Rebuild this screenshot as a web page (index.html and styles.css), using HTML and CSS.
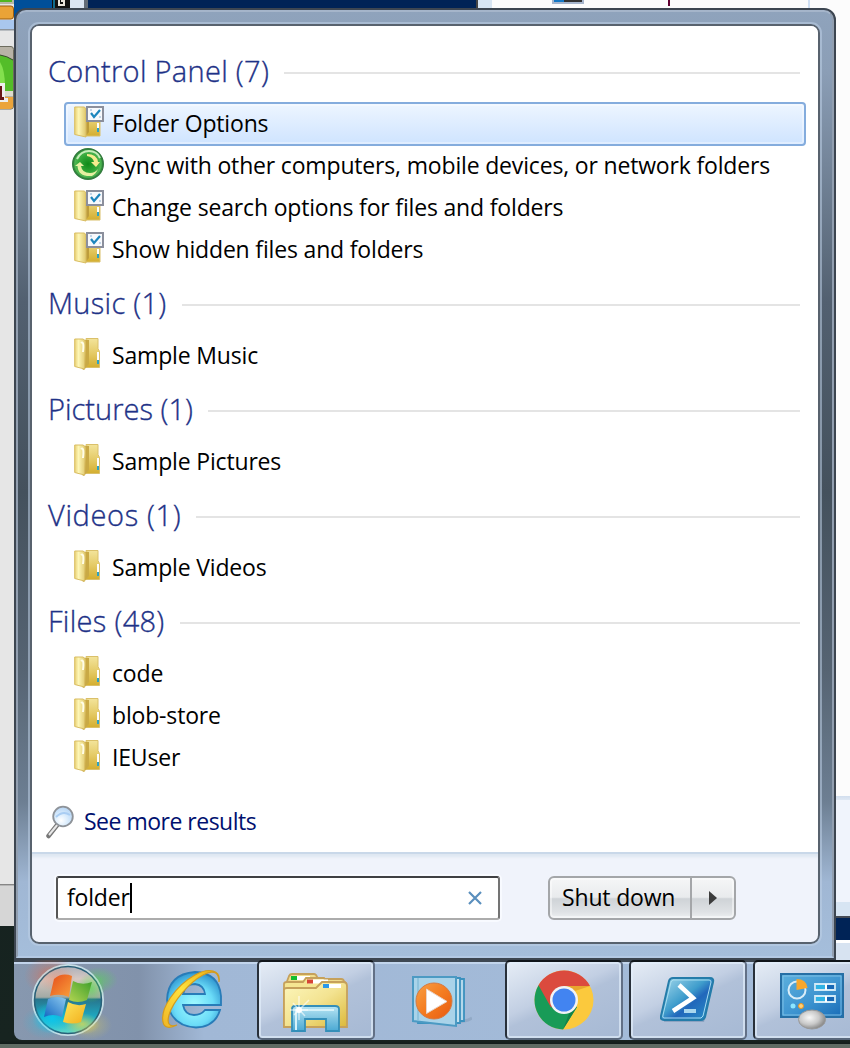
FILE: index.html
```html
<!DOCTYPE html>
<html lang="en">
<head>
<meta charset="utf-8">
<title>Start menu</title>
<link rel="stylesheet" href="styles.css">
</head>
<body>
<svg class="defs" width="0" height="0" aria-hidden="true">
  <defs>
    <linearGradient id="gFront" x1="0" x2="1"><stop offset="0" stop-color="#e9d075"/><stop offset=".35" stop-color="#fdf6b5"/><stop offset="1" stop-color="#dfc76b"/></linearGradient>
    <linearGradient id="gBack" x1="0" y1="0" x2="0" y2="1"><stop offset="0" stop-color="#f3e49b"/><stop offset=".5" stop-color="#e5cb68"/><stop offset="1" stop-color="#d4ae2f"/></linearGradient>
    <symbol id="folder" viewBox="0 0 32 32">
      <path d="M12 .5h12v10l1.500 3v16H12z" fill="url(#gBack)" stroke="#dac06a"/>
      <path d="M23 14h2v12h-2z" fill="#fff"/><path d="M23 22h2v4h-2z" fill="#2aa3c5"/>
      <path d="M8 4q3-3 7-2v24l-5 6-2-1z" fill="#c9a945"/>
      <path d="M.7 1h8.300q3 1 2.500 4l-1 26L.7 28.500z" fill="url(#gFront)" stroke="#d9bd62"/>
      <path d="M7 5c2-2 3 1 2 9" stroke="#fffde8" stroke-width="2" fill="none"/>
    </symbol>
    <symbol id="options" viewBox="0 0 32 32">
      <path d="M12 3h14v27H12z" fill="url(#gBack)" stroke="#dac06a"/>
      <path d="M23 17h2v9h-2z" fill="#fff"/><path d="M23 22h2v4h-2z" fill="#2aa3c5"/>
      <path d="M10 3l5 1v22l-4 5z" fill="#bd9c3c"/>
      <path d="M.7 1h9.800l1.500 2v28L.7 28.500z" fill="url(#gFront)" stroke="#d9bd62"/>
      <path d="M13 1h16v14H13z" fill="#f7f9fc" stroke="#8b8f9c" stroke-width="2"/>
      <path d="M17 7l3 4 6-7" stroke="#1d86bd" stroke-width="2.200" fill="none"/>
      <path d="M16 4h2M25 11h2" stroke="#c3d5e8" stroke-width="2"/>
    </symbol>
    <radialGradient id="gSync" cx=".5" cy=".5" r=".5"><stop offset="0" stop-color="#0f8a18"/><stop offset=".6" stop-color="#35a93a"/><stop offset=".85" stop-color="#4fb552"/><stop offset="1" stop-color="#1f7a2b"/></radialGradient>
    <linearGradient id="gFile" x1="0" y1="0" x2="1" y2="1"><stop offset="0" stop-color="#fdf7bd"/><stop offset=".5" stop-color="#f3e391"/><stop offset="1" stop-color="#dcb93a"/></linearGradient>
    <linearGradient id="gStand" x1="0" y1="0" x2="0" y2="1"><stop offset="0" stop-color="#b9e6f4"/><stop offset=".5" stop-color="#7fc5e2"/><stop offset="1" stop-color="#4ba9d4"/></linearGradient>
    <radialGradient id="gIe" cx=".5" cy=".6" r=".6"><stop offset="0" stop-color="#a2fbff"/><stop offset=".6" stop-color="#6bdcf8"/><stop offset="1" stop-color="#2f95cf"/></radialGradient>
    <linearGradient id="gRing" x1="0" y1="1" x2="1" y2="0"><stop offset="0" stop-color="#efb526"/><stop offset=".5" stop-color="#ffe23d"/><stop offset="1" stop-color="#e8a90f"/></linearGradient>
    <linearGradient id="gPs" x1="0" y1="0" x2="1" y2="1"><stop offset="0" stop-color="#a8dbed"/><stop offset=".45" stop-color="#3f9dcc"/><stop offset=".6" stop-color="#2167bb"/><stop offset="1" stop-color="#2b94c8"/></linearGradient>
    <linearGradient id="gCp" x1="0" y1="0" x2="1" y2="1"><stop offset="0" stop-color="#5cb0dd"/><stop offset=".55" stop-color="#3e94d0"/><stop offset="1" stop-color="#176bb7"/></linearGradient>
    <radialGradient id="gMouse" cx=".4" cy=".4" r=".6"><stop offset="0" stop-color="#f8f8f8"/><stop offset=".6" stop-color="#c9c9c9"/><stop offset="1" stop-color="#8d8d8d"/></radialGradient>
    <linearGradient id="gPlay" x1="0" y1="0" x2="1" y2="1"><stop offset="0" stop-color="#f7a046"/><stop offset=".5" stop-color="#f47c20"/><stop offset="1" stop-color="#e85a10"/></linearGradient>
    <linearGradient id="gOrb" x1="0" y1="0" x2="0" y2="1"><stop offset="0" stop-color="#a9aeb9"/><stop offset=".2" stop-color="#d6c8c2"/><stop offset=".46" stop-color="#a2aaa5"/><stop offset=".49" stop-color="#28758d"/><stop offset=".75" stop-color="#1eabc4"/><stop offset="1" stop-color="#68dfc9"/></linearGradient>
    <radialGradient id="gRed"><stop offset="0" stop-color="#f3653c" stop-opacity=".8"/><stop offset="1" stop-color="#f3653c" stop-opacity="0"/></radialGradient>
    <radialGradient id="gGreen"><stop offset="0" stop-color="#4de044" stop-opacity=".8"/><stop offset="1" stop-color="#4de044" stop-opacity="0"/></radialGradient>
    <radialGradient id="gCyan"><stop offset="0" stop-color="#09c8f0" stop-opacity=".9"/><stop offset="1" stop-color="#09c8f0" stop-opacity="0"/></radialGradient>
    <radialGradient id="gYellow"><stop offset="0" stop-color="#f4dc3d" stop-opacity=".85"/><stop offset="1" stop-color="#f4dc3d" stop-opacity="0"/></radialGradient>
    <linearGradient id="fRed" x1="0" y1="0" x2="1" y2="1"><stop offset="0" stop-color="#e54c1c"/><stop offset="1" stop-color="#f9a13b"/></linearGradient>
    <linearGradient id="fGreen" x1="1" y1="0" x2="0" y2="1"><stop offset="0" stop-color="#3c9e2b"/><stop offset="1" stop-color="#b4d552"/></linearGradient>
    <linearGradient id="fBlue" x1="0" y1="1" x2="1" y2="0"><stop offset="0" stop-color="#1368c2"/><stop offset="1" stop-color="#8dc9ef"/></linearGradient>
    <linearGradient id="fYellow" x1="0" y1="0" x2="1" y2="1"><stop offset="0" stop-color="#fde65c"/><stop offset="1" stop-color="#f2ae1c"/></linearGradient>
    <radialGradient id="gLens" cx=".4" cy=".7" r=".7"><stop offset="0" stop-color="#ffffff"/><stop offset=".5" stop-color="#d8ebfc"/><stop offset="1" stop-color="#b6d5f5"/></radialGradient>
  </defs>
</svg>

<div class="desktop">
  <div class="strip-top">
    <span class="t-blue"></span><svg class="t-glyph" width="18" height="8" viewBox="0 0 18 8"><path d="M0 0h18v8H0z" fill="#111"/><path d="M7 0v5h5V1H9" stroke="#e8e4dc" stroke-width="2" fill="none"/><path d="M2 0v8" stroke="#126b8b" stroke-width="2"/></svg><span class="t-pale"></span><span class="t-edge"></span><span class="t-navy"></span><span class="t-pale2"></span><span class="t-white"><i class="t-icon"></i><i class="t-caret"></i><i class="t-line"></i></span>
  </div>
  <div class="strip-left">
    <svg width="14" height="926" viewBox="0 0 14 926">
      <path d="M0 0h14v926H0z" fill="#e6e6e6"/>
      <path d="M0 0h14v4H0z" fill="#b7b8a5"/><path d="M0 0h12v2H0z" fill="#4fb622"/>
      <path d="M-4 6h15q2.500 0 2.500 3v7q0 3-2.500 3H-4z" fill="#eaa337" stroke="#9b5d10"/>
      <path d="M0 20h14v9H0z" fill="#a9c7ee"/><path d="M0 29h14v1.500H0z" fill="#8d949c"/>
      <path d="M-3 46.500h14q2.500 0 2.500 3V106q0 3-2.500 3H-3z" fill="#b8b3a6" stroke="#6d6c5e"/>
      <path d="M0 55q7 1 13 5v31H0z" fill="#54bd29"/><path d="M0 55q7 1 13 5" stroke="#374b2b" fill="none"/>
      <path d="M0 62q5 8 5 25H0z" fill="#83e04e"/>
      <path d="M0 91h13v5H0z" fill="#dedbcd"/><path d="M0 97h13v9q0 3-3 3H0z" fill="#eba43b"/>
      <path d="M0 83h5v15h3v4H0z" fill="#eee"/><path d="M0 86h2v11h2v3H0z" fill="#671616"/>
      <path d="M0 884h14v1.500H0z" fill="#868686"/><path d="M0 886h14v40H0z" fill="#d6d6d6"/>
    </svg>
  </div>
  <div class="strip-right"></div>

  <main class="menu">
    <div class="frame">
      <div class="panel">
        <div class="results">
          <h2 class="group"><span>Control Panel (7)</span></h2>
          <div class="item selected"><svg class="icon"><use href="#options"/></svg><span>Folder Options</span></div>
          <div class="item"><svg class="icon sync" viewBox="0 0 32 32">
            <circle cx="16" cy="16" r="15.300" fill="url(#gSync)" stroke="#347c3f" stroke-width="1.400"/>
            <path d="M5 11Q9 3 17 3q8 0 11 7" stroke="#c4ecb8" stroke-width="2" fill="none"/>
            <path d="M15 6q10 0 11 8h2l-4 5-5-5h3q-1-5-7-6z" fill="#f5eb8e"/>
            <path d="M20 28Q6 29 5.500 18H3l5-4 4 4h-3q1 7 9 7 5 0 8-4-2 5-6 7z" fill="#e6efa1"/>
          </svg><span>Sync with other computers, mobile devices, or network folders</span></div>
          <div class="item"><svg class="icon"><use href="#options"/></svg><span>Change search options for files and folders</span></div>
          <div class="item"><svg class="icon"><use href="#options"/></svg><span>Show hidden files and folders</span></div>
          <h2 class="group"><span>Music (1)</span></h2>
          <div class="item"><svg class="icon"><use href="#folder"/></svg><span>Sample Music</span></div>
          <h2 class="group tight"><span>Pictures (1)</span></h2>
          <div class="item"><svg class="icon"><use href="#folder"/></svg><span>Sample Pictures</span></div>
          <h2 class="group loose"><span>Videos (1)</span></h2>
          <div class="item"><svg class="icon"><use href="#folder"/></svg><span>Sample Videos</span></div>
          <h2 class="group"><span>Files (48)</span></h2>
          <div class="item"><svg class="icon"><use href="#folder"/></svg><span>code</span></div>
          <div class="item"><svg class="icon"><use href="#folder"/></svg><span>blob-store</span></div>
          <div class="item"><svg class="icon"><use href="#folder"/></svg><span>IEUser</span></div>
          <div class="more">
            <svg class="lens" viewBox="0 0 30 34"><path d="M2.500 31L12 19" stroke="#777" stroke-width="4.500" stroke-linecap="round"/><path d="M3 30L12 19" stroke="#e8e8e8" stroke-width="2"/><circle cx="17" cy="11.500" r="9.800" fill="url(#gLens)" stroke="#8e9399" stroke-width="1.800"/><path d="M10 12q7-7 14-2" stroke="#a9cdf3" stroke-width="2" fill="none"/></svg>
            <span>See more results</span>
          </div>
        </div>
        <div class="footer">
          <div class="search"><span>folder</span><i class="caret"></i>
            <svg class="clear" viewBox="0 0 14 14"><path d="M1 1l12 12M13 1L1 13" stroke="#5a8fbd" stroke-width="2.200"/></svg>
          </div>
          <div class="power"><span class="shut">Shut down</span><span class="arrow"><svg width="8" height="14" viewBox="0 0 8 14"><path d="M0 0l8 7-8 7z" fill="#3c3c3c"/></svg></span></div>
        </div>
      </div>
    </div>
  </main>

  <footer class="taskbar">
    <div class="slot orb"><svg width="104" height="80" viewBox="0 0 104 80">
      <ellipse cx="36" cy="16" rx="26" ry="20" fill="url(#gRed)" opacity=".6"/><ellipse cx="84" cy="20" rx="20" ry="13" fill="url(#gGreen)" opacity=".6"/><ellipse cx="32" cy="62" rx="24" ry="17" fill="url(#gCyan)" opacity=".4"/><ellipse cx="76" cy="65" rx="22" ry="15" fill="url(#gYellow)" opacity=".4"/>
      <circle cx="54" cy="40" r="35" fill="url(#gOrb)" stroke="#c5dde5" stroke-width="2"/>
      <circle cx="54" cy="40" r="33.500" fill="none" stroke="#286078" stroke-width="1.500"/>
      <ellipse cx="42" cy="18" rx="20" ry="14" fill="url(#gRed)" opacity=".4"/><ellipse cx="77" cy="28" rx="14" ry="15" fill="url(#gGreen)" opacity=".8"/><ellipse cx="38" cy="58" rx="20" ry="16" fill="url(#gCyan)"/><ellipse cx="68" cy="64" rx="18" ry="11" fill="url(#gYellow)" opacity=".8"/>
      <path d="M40 19q8-7 18-3l-3 21q-9-4-19-1z" fill="url(#fRed)"/>
      <path d="M59 21q9 5 19 1l-5 18q-9 4-18 0z" fill="url(#fGreen)"/>
      <path d="M34 39q9-4 18 0l-4 18q-9-4-18 0z" fill="url(#fBlue)"/>
      <path d="M54 42q9 5 18 2l-5 18q-8 3-18 0z" fill="url(#fYellow)"/>
    </svg></div>
    <div class="slot ie"><svg width="64" height="66" viewBox="0 0 64 66">
      <path fill-rule="evenodd" d="M61 39H23q2 10 11 10 7 0 11-5h15Q55 61 36 61.500 10 60 7 34 8 8 35 6 59 7 61 30zM23 28h22q-1-9-10-10-10 0-12 10z" fill="url(#gIe)" stroke="#287cb8" stroke-width="1.800"/>
      <path d="M59 16C61 4 49 1 35 9 15 20 0 43 3 56c1 7 8 6 14 3C8 62 7 56 9 49 13 35 30 16 43 9c9-5 16-4 16 7z" fill="url(#gRing)" stroke="#d39b1f" stroke-width="1.200"/>
    </svg></div>
    <div class="slot button wide"><svg width="68" height="62" viewBox="0 0 68 62">
      <path d="M4 12l3-8q1-2 3-2h22q2 0 3 3l1 2h23q3 0 3 3v25H4z" fill="#f0dc8c" stroke="#c6a15b" stroke-width="1.800"/>
      <path d="M10 4h18v4H10z" fill="#fff"/><path d="M9 4h6v4H9z" fill="#13bd30"/>
      <path d="M2 12q0-2 3-2h16l3-4h18l2 4h18q2 0 2 3v41H2z" fill="#f5e692" stroke="#c6a15b" stroke-width="1.800"/>
      <path d="M26 7.500h20v4H26z" fill="#fff"/><path d="M25 7.500h6v4h-6z" fill="#d64535"/>
      <path d="M2 18q0-2 3-2h29l6-6h21q4 0 4 4v41H2z" fill="url(#gFile)" stroke="#c6a15b" stroke-width="1.800"/>
      <path d="M42 12h17v4H42z" fill="#fff"/><path d="M41 12h6v4h-6z" fill="#2a98ea"/>
      <path d="M10 37q0-3 3-3h40q4 0 4 3v22H44V47H23v12H10z" fill="url(#gStand)" stroke="#348fb9" stroke-width="1.800"/>
      <path d="M14 58V38h38" stroke="#d6f2fa" stroke-width="2" fill="none"/><path d="M17 24v24M8 38h18M11 31l12 13M27 28L12 43" stroke="#fff" stroke-opacity=".6" stroke-width="1.500"/><circle cx="17" cy="38" r="3" fill="#fff"/>
    </svg></div>
    <div class="slot media"><svg width="60" height="52" viewBox="0 0 60 52">
      <path d="M42 46q12 0 18-4" stroke="#7890ac" stroke-width="3" opacity=".4" fill="none"/>
      <path d="M10 3h42v42H10z" fill="#b4d8eb" stroke="#3b91be" stroke-width="1.800"/><path d="M6 2h42v45H6z" fill="#c2e1ef" stroke="#3b91be" stroke-width="1.800"/>
      <path d="M1 1h43v49L1 45z" fill="#a9d3e9" stroke="#4c9ac3" stroke-width="2"/><path d="M6 2v42" stroke="#75b3d1"/>
      <circle cx="22" cy="25" r="18" fill="url(#gPlay)" stroke="#d47a43"/><path d="M14.500 13v24.500L35 25.500z" fill="#fff" stroke="#e6d3c9"/>
    </svg></div>
    <div class="slot button"><svg width="60" height="60" viewBox="0 0 60 60">
      <circle cx="30" cy="30" r="29.500" fill="#fbc93d"/>
      <path d="M30 30L4.500 15.200A29.500 29.500 0 0 0 29 59.500L43 37z" fill="#189b57"/>
      <path d="M30 30l-13 7.500L4.500 15.200A29.500 29.500 0 0 1 56 16H30z" fill="#db4a3e"/>
      <path d="M30 16h26l-15 5z" fill="#e8a62e"/><path d="M43 37L29 59.500 36 41z" fill="#12834a"/>
      <circle cx="30" cy="30" r="14" fill="#f2f3f5"/><circle cx="30" cy="30" r="11.500" fill="#4284f1"/>
    </svg></div>
    <div class="slot button"><svg width="56" height="48" viewBox="0 0 56 48">
      <path d="M12 5h42L44 46H4z" fill="#4f6f97" opacity=".35"/>
      <path d="M13 2h37q4 0 3 4l-8 35q-1 3-4 3H4q-4 0-3-4L9 5q1-3 4-3z" fill="url(#gPs)" stroke="#247ca9" stroke-width="2"/>
      <path d="M13 4h36q2 0 2 2l-8 34-2 2H4q-2 0-1-3l8-33z" fill="none" stroke="#a6ddef"/>
      <path d="M19 9l14 13-20 13" stroke="#fff" stroke-width="4.500" fill="none"/><path d="M24 35h12" stroke="#a9d7ee" stroke-width="4"/>
    </svg></div>
    <div class="slot button last"><svg width="64" height="58" viewBox="0 0 64 58">
      <path d="M1 1h62v43H1z" fill="url(#gCp)" stroke="#266fa5" stroke-width="2"/><path d="M3 3h58v39H3z" fill="none" stroke="#7fc0e5"/>
      <circle cx="17" cy="17" r="8.500" fill="none" stroke="#d9edf8" stroke-width="2"/><path d="M16.500 17V6q10 0 11 9z" fill="#f8a72c"/>
      <path d="M35 11h20v6H35zM35 23h20v6H35z" fill="#1768b6" stroke="#d1eaf7" stroke-width="1.800"/><path d="M36 12h9v4h-9zM36 24h9v4h-9z" fill="#30b3e4"/><path d="M46 11v6M46 23v6" stroke="#fff" stroke-width="2"/>
      <circle cx="13" cy="33" r="2.500" fill="#8de6ff"/><circle cx="21" cy="33" r="2.500" fill="#ffd278" stroke="#ee951f"/>
      <ellipse cx="32" cy="46.500" rx="13.500" ry="9.500" fill="url(#gMouse)" stroke="#999"/>
    </svg></div>
  </footer>
</div>
</body>
</html>
```
FILE: styles.css
```css
* { box-sizing: border-box; }
body { margin: 0; font-family: "Open Sans", "Noto Sans", sans-serif; }
.defs { position: absolute; }
.desktop {
  position: relative; width: 850px; height: 1048px; overflow: hidden;
  background: linear-gradient(#121b20, #172420 1040px, #111c1b 1044px, #5e6b63 1044px);
}

/* windows behind the menu */
.strip-top { position: absolute; left: 14px; top: 0; width: 836px; height: 30px; display: flex; background: #fcfcfc; }
.t-blue { width: 38px; background: #004f99; }
.t-glyph { flex: none; }
.t-pale { width: 14px; background: #dbe5f1; }
.t-edge { width: 4px; background: #626b76; }
.t-navy { width: 390px; background: #002356; border-right: 2px solid #444; }
.t-pale2 { width: 14px; background: #d7e5f3; }
.t-white { flex: 1; display: flex; height: 8px; }
.t-icon { width: 32px; height: 4px; margin-left: 60px; background: linear-gradient(90deg, #1678c5 35%, #333 35%); border: 2px solid #a7b6cd; border-top: 0; }
.t-caret { width: 2px; height: 6px; margin-left: 84px; background: #600030; }
.t-line { width: 2px; height: 8px; margin-left: 138px; background: #d0e0f4; }
.strip-left { position: absolute; left: 0; top: 0; width: 14px; height: 926px; }
.strip-left svg { display: block; }
.strip-right {
  position: absolute; left: 836px; top: 8px; width: 14px; height: 952px;
  background: linear-gradient(#fcfcfc 788px, #d2deee 788px, #dfe8f4 792px, #f0f4fc 792px, #f0f4fc 894px, #d7e5f3 894px, #d7e5f3 908px, #454b55 908px, #454b55 910px, #002356 910px, #002356 932px, #fff 932px, #fff 935px, #d7e3f1 935px);
}

.menu { position: absolute; left: 14px; top: 8px; width: 822px; height: 952px; border: 2px solid #3d4651; border-radius: 12px 12px 0 0; background: #3d4651; }
.frame {
  height: 948px; padding: 12px; border: 2px solid #b0c3dc; border-color: #a5b5ca #929fb0 #b3c9e4; border-radius: 10px 10px 0 0;
  background: linear-gradient(#8fa3bc 0, #8b9eb6 60px, #526070 290px, #44515d 480px, #566473 660px, #6d7f93 790px, #a0b7d4 870px, #a5bedb);
}
.panel { height: 920px; border: 2px solid #58626e; border-radius: 9px; background: #f0f3fb; outline: 2px solid rgba(190, 207, 229, .55); overflow: hidden; display: flex; flex-direction: column; }
.results { height: 826px; flex: none; padding-top: 13px; background: #fff; }
.group { display: flex; align-items: center; gap: 15px; height: 64px; margin: 0; padding: 0 18px 0 16px; font-size: 29px; line-height: 40px; font-weight: 300; letter-spacing: .3px; color: #1e3287; white-space: nowrap; }
.group.tight { letter-spacing: .02px; }
.group.loose { letter-spacing: .65px; }
.group span { -webkit-text-stroke: .35px #1e3287; }
.group::after { content: ""; flex: 1; height: 2px; margin-top: 4px; background: #e4e4e4; }
.item { display: flex; align-items: center; height: 42px; margin: 0 12px 0 32px; padding-left: 10px; gap: 6px; font-size: 23px; line-height: 32px; letter-spacing: -.17px; color: #000; white-space: nowrap; }
.item.selected { height: 44px; margin-top: -1px; margin-bottom: -1px; padding-left: 8px; border: 2px solid #84acdd; border-radius: 4px; background: linear-gradient(#edf5ff, #cfe4ff); box-shadow: inset 0 0 0 2px rgba(255, 255, 255, .35); }
.item span { margin-top: -2px; }
.icon { width: 32px; height: 32px; flex: none; margin-top: -5px; }
.icon.sync { margin-left: -2px; margin-right: 2px; margin-top: -4px; }
.more { display: flex; align-items: center; gap: 8px; height: 46px; margin-top: 20px; padding-left: 14px; font-size: 23px; letter-spacing: -.5px; color: #00106f; }
.more span { margin-top: -2px; }
.lens { width: 30px; height: 34px; }

.footer { display: flex; align-items: flex-start; gap: 48px; height: 90px; padding: 20px 0 0 24px; border-top: 2px solid #c9d8e9; box-shadow: inset 0 4px 3px -1px #dee7f1; font-size: 23px; line-height: 36px; letter-spacing: -.17px; }
.search { display: flex; align-items: center; width: 444px; height: 44px; margin-top: 2px; padding: 0 16px 0 9px; border: 2px solid; border-color: #3f4043 #747474 #acacac #555; border-radius: 3px; background: #fff; box-shadow: 0 0 0 2px #f8faff; }
.search span { margin-top: -2px; }
.caret { width: 2px; height: 30px; background: #000; }
.clear { width: 14px; height: 14px; margin-left: auto; }
.power { display: flex; width: 188px; height: 44px; margin-top: 2px; border: 2px solid #a4a6a9; border-radius: 6px; background: linear-gradient(#f5f6f7, #e9ebed 48%, #cfd3d7 52%, #dfe2e5 85%, #edeff1); box-shadow: inset 0 0 0 2px rgba(255, 255, 255, .45); }
.shut { width: 142px; padding: 1px 0 0 12px; border-right: 2px solid #a4a6a9; white-space: nowrap; }
.arrow { flex: 1; display: flex; align-items: center; justify-content: center; }

.taskbar {
  position: absolute; left: 14px; top: 960px; width: 836px; height: 80px; display: flex; border-radius: 0 0 0 8px;
  background: linear-gradient(#3e4853 2px, #c2d5ec 2px, #c2d5ec 4px, transparent 4px), linear-gradient(90deg, #8798af, #8192ab 125px, #a1b8d6 190px, #a4bcda);
}
.slot { display: flex; align-items: center; justify-content: center; height: 80px; flex: none; }
.orb { width: 104px; }
.ie { width: 139px; }
.ie svg { margin-left: 8px; margin-top: -3px; }
.media { width: 130px; }
.media svg { margin-top: 4px; margin-left: 3px; }
.button { width: 118px; margin-right: 6px; border: 2px solid; border-color: #10151a #627086 #58677b #28303a; border-radius: 5px; background: linear-gradient(155deg, #e6edf6 0, #c2cfe3 42%, #b1c1d9 52%, #a6b9d4); box-shadow: inset 0 0 0 2px rgba(228, 239, 252, .65); }
.button.wide { margin-right: 0; }
.button.wide svg { margin-top: 6px; }
.button.last { margin-right: 0; }
.button.last svg { margin-top: 4px; }
```
